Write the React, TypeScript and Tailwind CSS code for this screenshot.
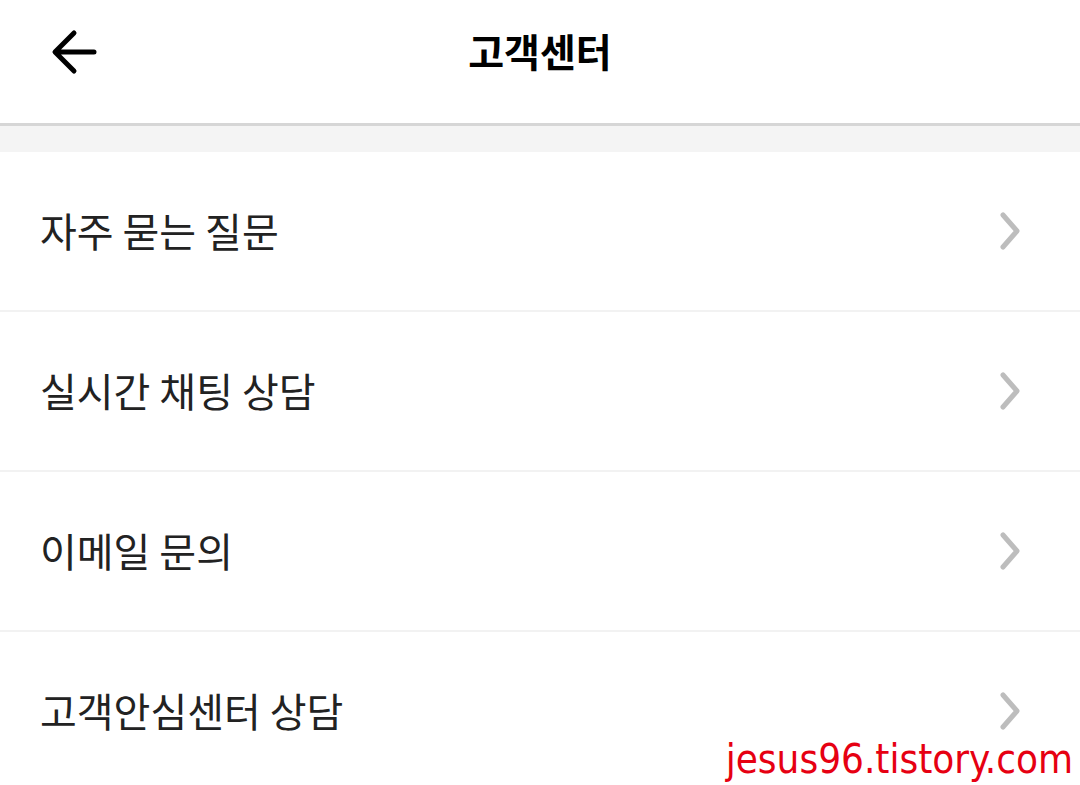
import React from 'react';

const items = ['자주 묻는 질문', '실시간 채팅 상담', '이메일 문의', '고객안심센터 상담'];

const Chevron: React.FC = () => (
  <svg width="24" height="40" viewBox="0 0 24 40" fill="none">
    <path d="M5 4 L19 20 L5 36" stroke="#bdbdbd" strokeWidth="5" strokeLinecap="round" strokeLinejoin="round" />
  </svg>
);

const App: React.FC = () => {
  return (
    <div
      className="relative w-[1080px] h-[785px] overflow-hidden bg-white"
      style={{ fontFamily: '"Noto Sans CJK KR", "Noto Sans", sans-serif' }}
    >
      <header className="relative h-[126px] flex items-center justify-center border-b-[3px] border-[#d6d6d6]">
        <button className="absolute left-[50px] top-[28px] w-[48px] h-[48px] flex items-center justify-center">
          <svg width="48" height="48" viewBox="0 0 48 48" fill="none">
            <path d="M44 24 H7 M24 5 L5 24 L24 43" stroke="#000" strokeWidth="5" strokeLinecap="round" strokeLinejoin="round" />
          </svg>
        </button>
        <h1 className="-mt-[22px] text-[39px] font-bold text-black">고객센터</h1>
      </header>
      <div className="h-[26px] bg-[#f4f4f4]" />
      <ul>
        {items.map((item) => (
          <li
            key={item}
            className="h-[160px] flex items-center justify-between pl-[40px] pr-[58px] border-b-2 border-[#f2f2f2]"
          >
            <span className="text-[40px] text-[#222] -mt-[2px]">{item}</span>
            <Chevron />
          </li>
        ))}
      </ul>
      <div
        className="absolute right-[7px] top-[739px] text-[40px] leading-none text-[#e60012]"
        style={{ fontFamily: '"DejaVu Sans Condensed", "DejaVu Sans", sans-serif' }}
      >
        jesus96.tistory.com
      </div>
    </div>
  );
};

export default App;
